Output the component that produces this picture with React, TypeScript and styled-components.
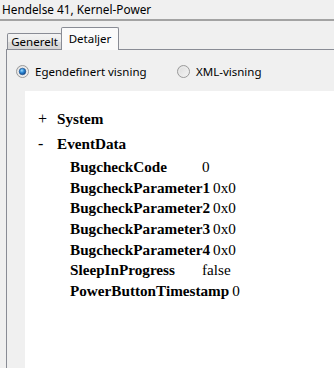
import React from 'react';
import styled, { createGlobalStyle } from 'styled-components';

// ============================================================================
// DATA
// ============================================================================

interface EventField {
  name: string;
  value: string;
}

const eventData: EventField[] = [
  { name: 'BugcheckCode', value: '0' },
  { name: 'BugcheckParameter1', value: '0x0' },
  { name: 'BugcheckParameter2', value: '0x0' },
  { name: 'BugcheckParameter3', value: '0x0' },
  { name: 'BugcheckParameter4', value: '0x0' },
  { name: 'SleepInProgress', value: 'false' },
  { name: 'PowerButtonTimestamp', value: '0' },
];

// ============================================================================
// STYLED COMPONENTS
// ============================================================================

const GlobalStyle = createGlobalStyle`
  html, body {
    margin: 0;
    padding: 0;
    background: #f0f0f0;
  }
  body {
    font-family: 'Noto Sans', 'Open Sans', sans-serif;
    color: #000;
  }
`;

const Window = styled.div`
  display: flex;
  flex-direction: column;
  min-height: 100vh;
  overflow: hidden;
`;

const TitleBar = styled.div`
  height: 19px;
  padding-left: 2px;
  font-size: 11.8px;
  line-height: 18px;
  border-bottom: 2px solid #a3a3a3;
  white-space: nowrap;
`;

const TabStrip = styled.div`
  display: flex;
  align-items: flex-end;
  height: 28px;
  padding-left: 7px;
  position: relative;
  z-index: 1;
`;

const Tab = styled.div<{ $active?: boolean }>`
  box-sizing: border-box;
  display: flex;
  align-items: center;
  justify-content: center;
  width: ${({ $active }) => ($active ? '58px' : '55px')};
  height: ${({ $active }) => ($active ? '23px' : '16px')};
  margin-left: ${({ $active }) => ($active ? '-1px' : '0')};
  margin-bottom: ${({ $active }) => ($active ? '-1px' : '0')};
  padding-bottom: ${({ $active }) => ($active ? '2px' : '0')};
  border: 1px solid #898c95;
  border-bottom: none;
  border-radius: 2px 2px 0 0;
  background: ${({ $active }) =>
    $active ? '#fafafa' : 'linear-gradient(#f3f3f3, #ebebeb 50%, #dcdcdc 51%, #d6d6d6)'};
  font-size: 11.5px;
  white-space: nowrap;
`;

const Panel = styled.div`
  flex: 1;
  display: flex;
  flex-direction: column;
  margin-left: 6px;
  border-left: 1px solid #898c95;
  border-top: 1px solid #898c95;
`;

const RadioRow = styled.div`
  display: flex;
  align-items: center;
  height: 41px;
  padding-left: 9px;
  padding-top: 1px;
  box-sizing: border-box;
`;

const RadioOption = styled.label<{ $width?: number }>`
  display: flex;
  align-items: center;
  gap: 6px;
  width: ${({ $width }) => ($width ? `${$width}px` : 'auto')};
  font-size: 11.5px;
  white-space: nowrap;
`;

const Content = styled.div`
  flex: 1;
  margin-left: 18px;
  background: #ffffff;
  padding: 15px 0 0 13px;
  font-family: 'Liberation Serif', 'Times New Roman', serif;
  font-size: 15.2px;
`;

const NodeRow = styled.div<{ $height: number }>`
  display: flex;
  height: ${({ $height }) => $height}px;
  line-height: ${({ $height }) => $height}px;
  font-weight: bold;
  white-space: nowrap;
`;

const Toggle = styled.span`
  width: 19px;
  font-size: 16px;
  font-weight: normal;
`;

const Children = styled.div`
  padding-left: 32px;
`;

const FieldRow = styled.div`
  display: flex;
  height: 20.7px;
  line-height: 20.7px;
  white-space: nowrap;
`;

const FieldName = styled.span`
  min-width: 129px;
  padding-right: 3px;
  font-weight: bold;
`;

const FieldValue = styled.span`
  font-weight: normal;
`;

// ============================================================================
// ICONS
// ============================================================================

const RadioIcon: React.FC<{ checked?: boolean }> = ({ checked }) => (
  <svg width="13" height="13" viewBox="0 0 13 13">
    <defs>
      <linearGradient id={checked ? 'rOn' : 'rOff'} x1="0" y1="0" x2="1" y2="1">
        <stop offset="0" stopColor="#d9d9d9" />
        <stop offset="1" stopColor="#f7f7f7" />
      </linearGradient>
      <radialGradient id="dot" cx="0.4" cy="0.35" r="0.7">
        <stop offset="0" stopColor="#9fdcff" />
        <stop offset="0.45" stopColor="#2e8ad6" />
        <stop offset="1" stopColor="#0c3f82" />
      </radialGradient>
    </defs>
    <circle cx="6.5" cy="6.5" r="6" fill={`url(#${checked ? 'rOn' : 'rOff'})`} stroke="#9a9a9a" strokeWidth="1" />
    <circle cx="6.5" cy="6.5" r="4.5" fill="none" stroke="#ececec" strokeWidth="1" />
    {checked && <circle cx="6.5" cy="6.5" r="3.3" fill="url(#dot)" stroke="#1c4f8c" strokeWidth="0.6" />}
  </svg>
);

// ============================================================================
// COMPONENT
// ============================================================================

export default function App() {
  return (
    <>
      <GlobalStyle />
      <Window>
        <TitleBar>Hendelse 41, Kernel-Power</TitleBar>

        <TabStrip>
          <Tab>Generelt</Tab>
          <Tab $active>Detaljer</Tab>
        </TabStrip>

        <Panel>
          <RadioRow>
            <RadioOption $width={161}>
              <RadioIcon checked />
              Egendefinert visning
            </RadioOption>
            <RadioOption>
              <RadioIcon />
              XML-visning
            </RadioOption>
          </RadioRow>

          <Content>
            <NodeRow $height={25}>
              <Toggle>+</Toggle>
              System
            </NodeRow>
            <NodeRow $height={26}>
              <Toggle>-</Toggle>
              EventData
            </NodeRow>
            <Children>
              {eventData.map((field) => (
                <FieldRow key={field.name}>
                  <FieldName>{field.name}</FieldName>
                  <FieldValue>{field.value}</FieldValue>
                </FieldRow>
              ))}
            </Children>
          </Content>
        </Panel>
      </Window>
    </>
  );
}
